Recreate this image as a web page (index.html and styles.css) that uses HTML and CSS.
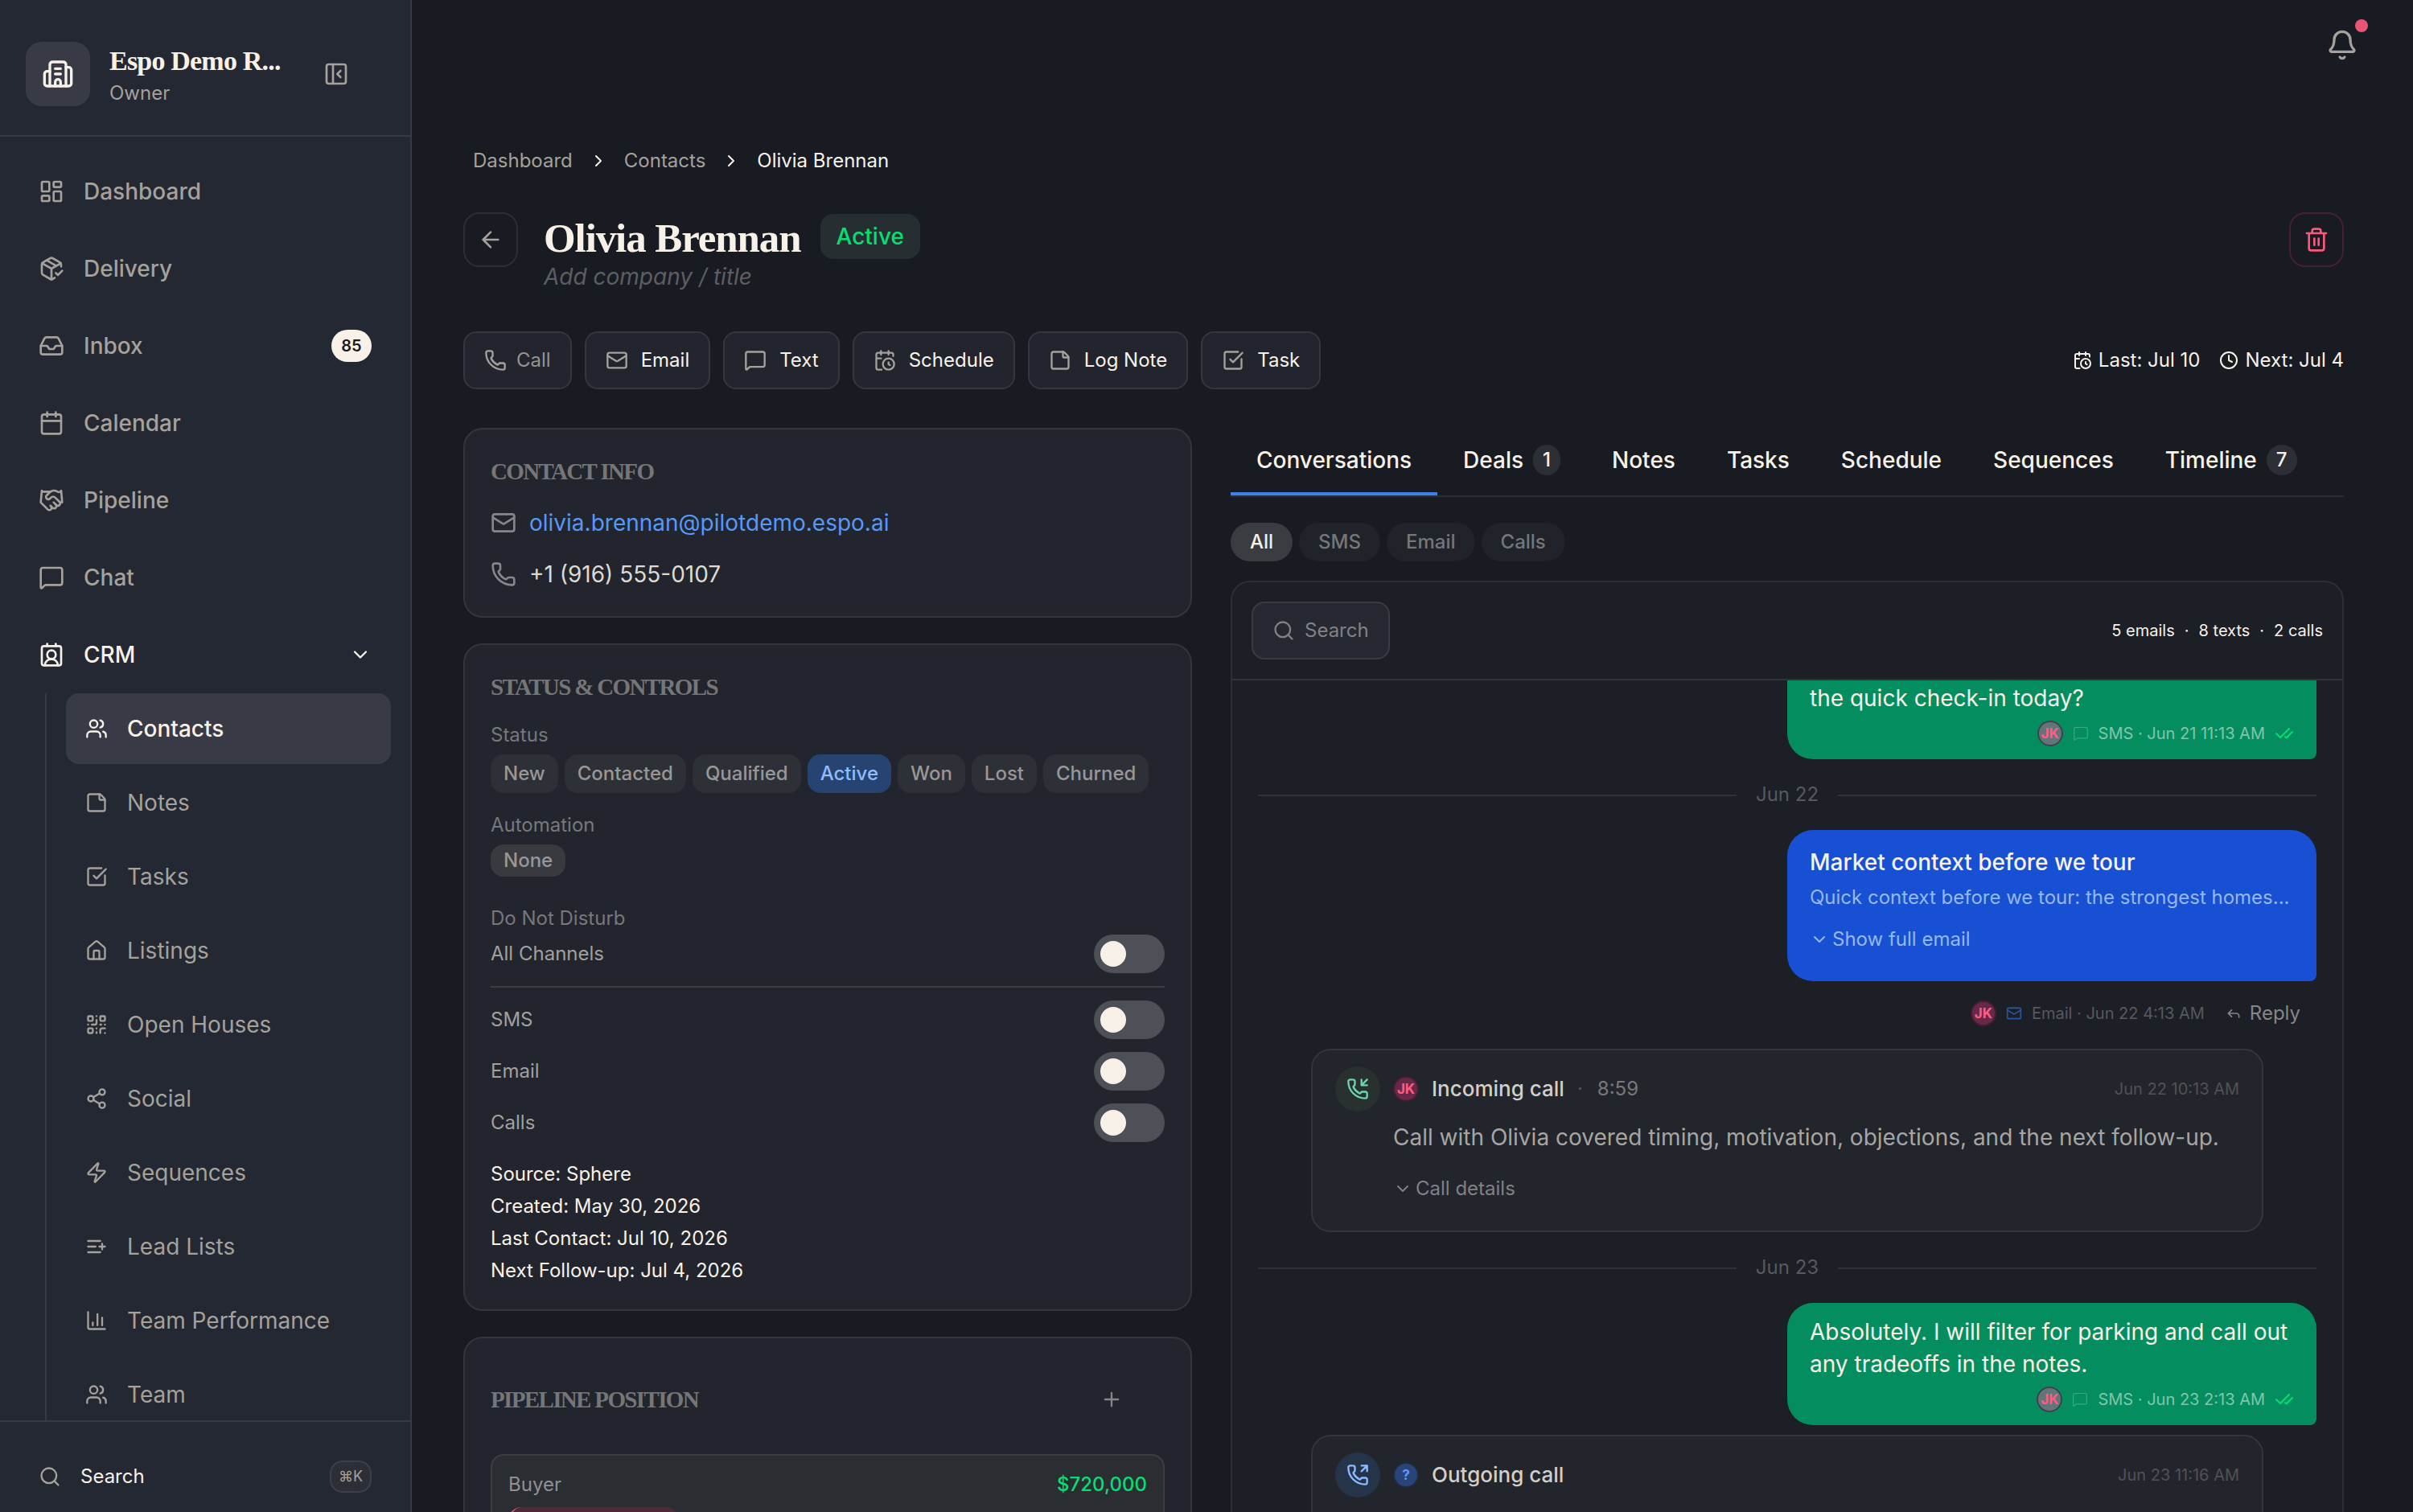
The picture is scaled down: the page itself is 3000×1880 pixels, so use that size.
FILE: index.html
```html
<!DOCTYPE html>
<html lang="en">
<head>
  <meta charset="UTF-8">
  <title>Olivia Brennan - Contacts</title>
  <meta name="viewport" content="width=device-width, initial-scale=1.0">
  <link rel="stylesheet" href="styles.css">
</head>
<body>

  <!-- icon sprite -->
  <svg class="sprite">
    <symbol id="i-building" viewBox="0 0 24 24"><path d="M10 12h4M10 8h4M14 21v-3a2 2 0 0 0-4 0v3"/><path d="M6 10H4a2 2 0 0 0-2 2v7a2 2 0 0 0 2 2h16a2 2 0 0 0 2-2V9a2 2 0 0 0-2-2h-2"/><path d="M6 21V5a2 2 0 0 1 2-2h8a2 2 0 0 1 2 2v16"/></symbol>
    <symbol id="i-panel" viewBox="0 0 24 24"><rect x="3" y="3" width="18" height="18" rx="2"/><path d="M9 3v18M16 15l-3-3 3-3"/></symbol>
    <symbol id="i-dashboard" viewBox="0 0 24 24"><rect x="3" y="3" width="7" height="9" rx="1"/><rect x="14" y="3" width="7" height="5" rx="1"/><rect x="14" y="12" width="7" height="9" rx="1"/><rect x="3" y="16" width="7" height="5" rx="1"/></symbol>
    <symbol id="i-package" viewBox="0 0 24 24"><path d="m16 16 2 2 4-4"/><path d="M21 10V8a2 2 0 0 0-1-1.73l-7-4a2 2 0 0 0-2 0l-7 4A2 2 0 0 0 3 8v8a2 2 0 0 0 1 1.73l7 4a2 2 0 0 0 2 0l2-1.14"/><path d="m7.5 4.27 9 5.15M3.29 7 12 12l8.71-5M12 22V12"/></symbol>
    <symbol id="i-inbox" viewBox="0 0 24 24"><path d="M22 12h-6l-2 3h-4l-2-3H2"/><path d="M5.45 5.11 2 12v6a2 2 0 0 0 2 2h16a2 2 0 0 0 2-2v-6l-3.45-6.89A2 2 0 0 0 16.76 4H7.24a2 2 0 0 0-1.79 1.11z"/></symbol>
    <symbol id="i-calendar" viewBox="0 0 24 24"><path d="M8 2v4M16 2v4M3 10h18"/><rect x="3" y="4" width="18" height="18" rx="2"/></symbol>
    <symbol id="i-handshake" viewBox="0 0 24 24"><path d="m11 17 2 2a1 1 0 1 0 3-3"/><path d="m14 14 2.5 2.5a1 1 0 1 0 3-3l-3.88-3.88a3 3 0 0 0-4.24 0l-.88.88a1 1 0 1 1-3-3l2.81-2.81a5.79 5.79 0 0 1 7.06-.87l.47.28a2 2 0 0 0 1.42.25L21 4"/><path d="m21 3 1 11h-2M3 3 2 14l6.5 6.5a1 1 0 1 0 3-3M3 4h8"/></symbol>
    <symbol id="i-message" viewBox="0 0 24 24"><path d="M22 17a2 2 0 0 1-2 2H6.828a2 2 0 0 0-1.414.586l-2.202 2.202A.71.71 0 0 1 2 21.286V5a2 2 0 0 1 2-2h16a2 2 0 0 1 2 2z"/></symbol>
    <symbol id="i-contact" viewBox="0 0 24 24"><path d="M16 2v2M17.915 22a6 6 0 0 0-12 0M8 2v2"/><circle cx="12" cy="12" r="4"/><rect x="3" y="4" width="18" height="18" rx="2"/></symbol>
    <symbol id="i-users" viewBox="0 0 24 24"><path d="M16 21v-2a4 4 0 0 0-4-4H6a4 4 0 0 0-4 4v2M16 3.128a4 4 0 0 1 0 7.744M22 21v-2a4 4 0 0 0-3-3.87"/><circle cx="9" cy="7" r="4"/></symbol>
    <symbol id="i-note" viewBox="0 0 24 24"><path d="M21 9a2.4 2.4 0 0 0-.706-1.706l-3.588-3.588A2.4 2.4 0 0 0 15 3H5a2 2 0 0 0-2 2v14a2 2 0 0 0 2 2h14a2 2 0 0 0 2-2z"/><path d="M15 3v5a1 1 0 0 0 1 1h5"/></symbol>
    <symbol id="i-task" viewBox="0 0 24 24"><path d="M21 10.656V19a2 2 0 0 1-2 2H5a2 2 0 0 1-2-2V5a2 2 0 0 1 2-2h12.344"/><path d="m9 11 3 3L22 4"/></symbol>
    <symbol id="i-house" viewBox="0 0 24 24"><path d="M15 21v-8a1 1 0 0 0-1-1h-4a1 1 0 0 0-1 1v8"/><path d="M3 10a2 2 0 0 1 .709-1.528l7-6a2 2 0 0 1 2.582 0l7 6A2 2 0 0 1 21 10v9a2 2 0 0 1-2 2H5a2 2 0 0 1-2-2z"/></symbol>
    <symbol id="i-qr" viewBox="0 0 24 24"><rect x="3" y="3" width="5" height="5" rx="1"/><rect x="16" y="3" width="5" height="5" rx="1"/><rect x="3" y="16" width="5" height="5" rx="1"/><path d="M21 16h-3a2 2 0 0 0-2 2v3M21 21v.01M12 7v3a2 2 0 0 1-2 2H7M3 12h.01M12 3h.01M12 16v.01M16 12h1M21 12v.01M12 21v-1"/></symbol>
    <symbol id="i-share" viewBox="0 0 24 24"><circle cx="18" cy="5" r="3"/><circle cx="6" cy="12" r="3"/><circle cx="18" cy="19" r="3"/><path d="m8.59 13.51 6.83 3.98M15.41 6.51l-6.82 3.98"/></symbol>
    <symbol id="i-zap" viewBox="0 0 24 24"><path d="M4 14a1 1 0 0 1-.78-1.63l9.9-10.2a.5.5 0 0 1 .86.46l-1.92 6.02A1 1 0 0 0 13 10h7a1 1 0 0 1 .78 1.63l-9.9 10.2a.5.5 0 0 1-.86-.46l1.92-6.02A1 1 0 0 0 11 14z"/></symbol>
    <symbol id="i-list" viewBox="0 0 24 24"><path d="M11 12H3M16 6H3M16 18H3M18 9v6M21 12h-6"/></symbol>
    <symbol id="i-chart" viewBox="0 0 24 24"><path d="M3 3v16a2 2 0 0 0 2 2h16M18 17V9M13 17V5M8 17v-3"/></symbol>
    <symbol id="i-search" viewBox="0 0 24 24"><circle cx="11" cy="11" r="8"/><path d="m21 21-4.34-4.34"/></symbol>
    <symbol id="i-down" viewBox="0 0 24 24"><path d="m6 9 6 6 6-6"/></symbol>
    <symbol id="i-right" viewBox="0 0 24 24"><path d="m9 18 6-6-6-6"/></symbol>
    <symbol id="i-left" viewBox="0 0 24 24"><path d="m12 19-7-7 7-7M19 12H5"/></symbol>
    <symbol id="i-bell" viewBox="0 0 24 24"><path d="M10.268 21a2 2 0 0 0 3.464 0"/><path d="M3.262 15.326A1 1 0 0 0 4 17h16a1 1 0 0 0 .74-1.673C19.41 13.956 18 12.499 18 8A6 6 0 0 0 6 8c0 4.499-1.411 5.956-2.738 7.326"/></symbol>
    <symbol id="i-trash" viewBox="0 0 24 24"><path d="M10 11v6M14 11v6M19 6v14a2 2 0 0 1-2 2H7a2 2 0 0 1-2-2V6M3 6h18M8 6V4a2 2 0 0 1 2-2h4a2 2 0 0 1 2 2v2"/></symbol>
    <symbol id="i-phone" viewBox="0 0 24 24"><path d="M13.832 16.568a1 1 0 0 0 1.213-.303l.355-.465A2 2 0 0 1 17 15h3a2 2 0 0 1 2 2v3a2 2 0 0 1-2 2A18 18 0 0 1 2 4a2 2 0 0 1 2-2h3a2 2 0 0 1 2 2v3a2 2 0 0 1-.8 1.6l-.468.351a1 1 0 0 0-.292 1.233 14 14 0 0 0 6.392 6.384"/></symbol>
    <symbol id="i-phone-in" viewBox="0 0 24 24"><path d="M16 2v6h6M22 2l-6 6"/><path d="M13.832 16.568a1 1 0 0 0 1.213-.303l.355-.465A2 2 0 0 1 17 15h3a2 2 0 0 1 2 2v3a2 2 0 0 1-2 2A18 18 0 0 1 2 4a2 2 0 0 1 2-2h3a2 2 0 0 1 2 2v3a2 2 0 0 1-.8 1.6l-.468.351a1 1 0 0 0-.292 1.233 14 14 0 0 0 6.392 6.384"/></symbol>
    <symbol id="i-phone-out" viewBox="0 0 24 24"><path d="m16 8 6-6M22 8V2h-6"/><path d="M13.832 16.568a1 1 0 0 0 1.213-.303l.355-.465A2 2 0 0 1 17 15h3a2 2 0 0 1 2 2v3a2 2 0 0 1-2 2A18 18 0 0 1 2 4a2 2 0 0 1 2-2h3a2 2 0 0 1 2 2v3a2 2 0 0 1-.8 1.6l-.468.351a1 1 0 0 0-.292 1.233 14 14 0 0 0 6.392 6.384"/></symbol>
    <symbol id="i-mail" viewBox="0 0 24 24"><path d="m22 7-8.991 5.727a2 2 0 0 1-2.009 0L2 7"/><rect x="2" y="4" width="20" height="16" rx="2"/></symbol>
    <symbol id="i-cal-clock" viewBox="0 0 24 24"><path d="M16 14v2.2l1.6 1M16 2v4M21 7.5V6a2 2 0 0 0-2-2H5a2 2 0 0 0-2 2v14a2 2 0 0 0 2 2h3.5M3 10h5M8 2v4"/><circle cx="16" cy="16" r="6"/></symbol>
    <symbol id="i-clock" viewBox="0 0 24 24"><circle cx="12" cy="12" r="10"/><path d="M12 6v6l4 2"/></symbol>
    <symbol id="i-plus" viewBox="0 0 24 24"><path d="M5 12h14M12 5v14"/></symbol>
    <symbol id="i-checks" viewBox="0 0 24 24"><path d="M18 6 7 17l-5-5M22 10l-7.5 7.5L13 16"/></symbol>
    <symbol id="i-reply" viewBox="0 0 24 24"><path d="M20 18v-2a4 4 0 0 0-4-4H4M9 17l-5-5 5-5"/></symbol>
  </svg>

  <div class="app">
    <aside class="sidebar">
      <div class="workspace">
        <div class="logo"><svg class="icon icon-40"><use href="#i-building"/></svg></div>
        <div class="workspace-text">
          <div class="workspace-name">Espo Demo R...</div>
          <div class="workspace-role">Owner</div>
        </div>
        <svg class="icon icon-32"><use href="#i-panel"/></svg>
      </div>

      <nav class="nav">
        <a class="nav-item"><svg class="icon icon-32"><use href="#i-dashboard"/></svg>Dashboard</a>
        <a class="nav-item"><svg class="icon icon-32"><use href="#i-package"/></svg>Delivery</a>
        <a class="nav-item"><svg class="icon icon-32"><use href="#i-inbox"/></svg>Inbox<span class="count">85</span></a>
        <a class="nav-item"><svg class="icon icon-32"><use href="#i-calendar"/></svg>Calendar</a>
        <a class="nav-item"><svg class="icon icon-32"><use href="#i-handshake"/></svg>Pipeline</a>
        <a class="nav-item"><svg class="icon icon-32"><use href="#i-message"/></svg>Chat</a>
        <a class="nav-item open"><svg class="icon icon-32"><use href="#i-contact"/></svg>CRM<svg class="icon icon-28 push"><use href="#i-down"/></svg></a>
        <div class="subnav">
          <a class="subnav-item current"><svg class="icon icon-28"><use href="#i-users"/></svg>Contacts</a>
          <a class="subnav-item"><svg class="icon icon-28"><use href="#i-note"/></svg>Notes</a>
          <a class="subnav-item"><svg class="icon icon-28"><use href="#i-task"/></svg>Tasks</a>
          <a class="subnav-item"><svg class="icon icon-28"><use href="#i-house"/></svg>Listings</a>
          <a class="subnav-item"><svg class="icon icon-28"><use href="#i-qr"/></svg>Open Houses</a>
          <a class="subnav-item"><svg class="icon icon-28"><use href="#i-share"/></svg>Social</a>
          <a class="subnav-item"><svg class="icon icon-28"><use href="#i-zap"/></svg>Sequences</a>
          <a class="subnav-item"><svg class="icon icon-28"><use href="#i-list"/></svg>Lead Lists</a>
          <a class="subnav-item"><svg class="icon icon-28"><use href="#i-chart"/></svg>Team Performance</a>
          <a class="subnav-item"><svg class="icon icon-28"><use href="#i-users"/></svg>Team</a>
        </div>
      </nav>

      <div class="sidebar-search">
        <svg class="icon icon-28"><use href="#i-search"/></svg>
        <span>Search</span>
        <kbd>⌘K</kbd>
      </div>
    </aside>

    <main class="main">
      <div class="topbar">
        <div class="bell"><svg class="icon icon-40"><use href="#i-bell"/></svg><span class="bell-dot"></span></div>
      </div>

      <div class="breadcrumb">
        <a>Dashboard</a>
        <svg class="icon icon-24"><use href="#i-right"/></svg>
        <a>Contacts</a>
        <svg class="icon icon-24"><use href="#i-right"/></svg>
        <span>Olivia Brennan</span>
      </div>

      <header class="head">
        <button class="square-btn"><svg class="icon icon-32"><use href="#i-left"/></svg></button>
        <div class="head-text">
          <div class="name-row">
            <h1>Olivia Brennan</h1>
            <span class="status-badge">Active</span>
          </div>
          <div class="subtitle">Add company / title</div>
        </div>
        <button class="square-btn danger"><svg class="icon icon-32"><use href="#i-trash"/></svg></button>
      </header>

      <div class="actions">
        <button class="action disabled"><svg class="icon icon-28"><use href="#i-phone"/></svg>Call</button>
        <button class="action"><svg class="icon icon-28"><use href="#i-mail"/></svg>Email</button>
        <button class="action"><svg class="icon icon-28"><use href="#i-message"/></svg>Text</button>
        <button class="action"><svg class="icon icon-28"><use href="#i-cal-clock"/></svg>Schedule</button>
        <button class="action"><svg class="icon icon-28"><use href="#i-note"/></svg>Log Note</button>
        <button class="action"><svg class="icon icon-28"><use href="#i-task"/></svg>Task</button>
        <div class="touches">
          <span><svg class="icon icon-24"><use href="#i-cal-clock"/></svg>Last: Jul 10</span>
          <span><svg class="icon icon-24"><use href="#i-clock"/></svg>Next: Jul 4</span>
        </div>
      </div>

      <div class="columns">
        <div class="left">
          <section class="card">
            <h2>CONTACT INFO</h2>
            <div class="info-row"><svg class="icon icon-32"><use href="#i-mail"/></svg><a class="email">olivia.brennan@pilotdemo.espo.ai</a></div>
            <div class="info-row"><svg class="icon icon-32"><use href="#i-phone"/></svg><span>+1 (916) 555-0107</span></div>
          </section>

          <section class="card">
            <h2>STATUS &amp; CONTROLS</h2>
            <div class="label">Status</div>
            <div class="chips">
              <span class="chip">New</span>
              <span class="chip">Contacted</span>
              <span class="chip">Qualified</span>
              <span class="chip selected">Active</span>
              <span class="chip">Won</span>
              <span class="chip">Lost</span>
              <span class="chip">Churned</span>
            </div>
            <div class="label">Automation</div>
            <div class="chips"><span class="chip none">None</span></div>
            <div class="label dnd">Do Not Disturb</div>
            <div class="toggle-row all"><span>All Channels</span><i class="toggle"></i></div>
            <div class="toggle-row"><span>SMS</span><i class="toggle"></i></div>
            <div class="toggle-row"><span>Email</span><i class="toggle"></i></div>
            <div class="toggle-row"><span>Calls</span><i class="toggle"></i></div>
            <ul class="facts">
              <li>Source: Sphere</li>
              <li>Created: May 30, 2026</li>
              <li>Last Contact: Jul 10, 2026</li>
              <li>Next Follow-up: Jul 4, 2026</li>
            </ul>
          </section>

          <section class="card">
            <div class="card-head">
              <h2>PIPELINE POSITION</h2>
              <svg class="icon icon-28"><use href="#i-plus"/></svg>
            </div>
            <div class="deal">
              <div class="deal-row"><span>Buyer</span><strong>$720,000</strong></div>
              <div class="deal-stage"></div>
            </div>
          </section>
        </div>

        <div class="right">
          <div class="tabs">
            <a class="tab active">Conversations</a>
            <a class="tab">Deals<span>1</span></a>
            <a class="tab">Notes</a>
            <a class="tab">Tasks</a>
            <a class="tab">Schedule</a>
            <a class="tab">Sequences</a>
            <a class="tab">Timeline<span>7</span></a>
          </div>

          <div class="filters">
            <span class="filter on">All</span>
            <span class="filter">SMS</span>
            <span class="filter">Email</span>
            <span class="filter">Calls</span>
          </div>

          <section class="panel">
            <div class="panel-head">
              <button class="search-btn"><svg class="icon icon-28"><use href="#i-search"/></svg>Search</button>
              <div class="totals"><span>5 emails</span><span>·</span><span>8 texts</span><span>·</span><span>2 calls</span></div>
            </div>

            <div class="thread">
              <div class="bubble sms cut">
                <p>the quick check-in today?</p>
                <div class="meta">
                  <span class="avatar on-sms">JK</span>
                  <svg class="icon icon-20 kind"><use href="#i-message"/></svg>
                  <span>SMS · Jun 21 11:13 AM</span>
                  <svg class="icon icon-24 read"><use href="#i-checks"/></svg>
                </div>
              </div>

              <div class="day"><span>Jun 22</span></div>

              <div class="bubble mail">
                <h3>Market context before we tour</h3>
                <p class="preview">Quick context before we tour: the strongest homes...</p>
                <a class="more"><svg class="icon icon-24"><use href="#i-down"/></svg>Show full email</a>
              </div>
              <div class="meta below">
                <span class="avatar">JK</span>
                <svg class="icon icon-20 kind-mail"><use href="#i-mail"/></svg>
                <span>Email · Jun 22 4:13 AM</span>
                <a class="reply"><svg class="icon icon-20"><use href="#i-reply"/></svg>Reply</a>
              </div>

              <article class="call">
                <div class="call-icon in"><svg class="icon icon-28"><use href="#i-phone-in"/></svg></div>
                <div class="call-body">
                  <div class="call-head">
                    <span class="avatar">JK</span>
                    <b>Incoming call</b>
                    <span class="dot">·</span>
                    <span class="length">8:59</span>
                    <time>Jun 22 10:13 AM</time>
                  </div>
                  <p>Call with Olivia covered timing, motivation, objections, and the next follow-up.</p>
                  <a class="more"><svg class="icon icon-24"><use href="#i-down"/></svg>Call details</a>
                </div>
              </article>

              <div class="day"><span>Jun 23</span></div>

              <div class="bubble sms">
                <p>Absolutely. I will filter for parking and call out any tradeoffs in the notes.</p>
                <div class="meta">
                  <span class="avatar on-sms">JK</span>
                  <svg class="icon icon-20 kind"><use href="#i-message"/></svg>
                  <span>SMS · Jun 23 2:13 AM</span>
                  <svg class="icon icon-24 read"><use href="#i-checks"/></svg>
                </div>
              </div>

              <article class="call outgoing">
                <div class="call-icon out"><svg class="icon icon-28"><use href="#i-phone-out"/></svg></div>
                <div class="call-body">
                  <div class="call-head">
                    <span class="avatar unknown">?</span>
                    <b>Outgoing call</b>
                    <time>Jun 23 11:16 AM</time>
                  </div>
                </div>
              </article>
            </div>
          </section>
        </div>
      </div>
    </main>
  </div>

</body>
</html>
```

FILE: styles.css
```css
* { box-sizing: border-box; }

body {
  margin: 0;
  background: #181b22;
  color: #f7f1e8;
  font-family: Inter, "Liberation Sans", sans-serif;
  font-size: 24px;
  line-height: 32px;
}
h1, h2, h3, p, ul { margin: 0; padding: 0; }
button { font: inherit; color: inherit; padding: 0; }

.sprite { display: none; }
.icon { fill: none; stroke: currentColor; stroke-width: 2; stroke-linecap: round; stroke-linejoin: round; flex: none; }
.icon-20 { width: 20px; height: 20px; }
.icon-24 { width: 24px; height: 24px; }
.icon-28 { width: 28px; height: 28px; }
.icon-32 { width: 32px; height: 32px; }
.icon-40 { width: 40px; height: 40px; }
.push { margin-left: auto; }

.app { display: flex; width: 3000px; height: 1880px; overflow: hidden; }

/* sidebar */
.sidebar { width: 512px; flex: none; display: flex; flex-direction: column; background: #242833; border-right: 2px solid #373a45; color: #a5a19b; }
.workspace { height: 170px; flex: none; display: flex; align-items: flex-start; padding: 52px 32px 0; border-bottom: 2px solid #373a45; }
.logo { width: 80px; height: 80px; border-radius: 20px; background: #383b46; color: #f7f1e8; display: flex; align-items: center; justify-content: center; margin-right: 24px; }
.workspace-text { width: 252px; }
.workspace-name { font-family: "Liberation Serif", serif; font-weight: bold; font-size: 34px; line-height: 48px; letter-spacing: -0.8px; color: #f7f1e8; white-space: nowrap; }
.workspace-role { line-height: 32px; }
.workspace > .icon { margin: 24px 0 0 14px; }

.nav { flex: 1; min-height: 0; overflow: hidden; padding: 24px 24px 0; display: flex; flex-direction: column; gap: 8px; }
.nav-item { height: 88px; flex: none; display: flex; align-items: center; gap: 24px; padding: 0 24px; font-size: 28px; font-weight: 500; }
.nav-item.open { color: #f7f1e8; }
.count { margin-left: auto; width: 50px; height: 40px; border-radius: 20px; background: #f7f1e8; color: #181b22; font-size: 20px; font-weight: 600; line-height: 40px; text-align: center; }
.subnav { margin: -4px 0 0 32px; padding-left: 24px; border-left: 2px solid #373a45; display: flex; flex-direction: column; gap: 4px; }
.subnav-item { height: 88px; flex: none; display: flex; align-items: center; gap: 24px; padding: 0 24px; border-radius: 16px; font-size: 28px; }
.subnav-item.current { background: #383b46; color: #f7f1e8; font-weight: 500; }

.sidebar-search { height: 114px; flex: none; display: flex; align-items: center; padding: 24px 48px 0; gap: 24px; border-top: 2px solid #373a45; }
.sidebar-search span { color: #f7f1e8; }
.sidebar-search kbd { margin-left: auto; width: 52px; height: 40px; border: 2px solid #3d4049; border-radius: 16px; background: #2c2f37; font: 18px/36px Inter, "DejaVu Sans", sans-serif; text-align: center; }

/* main */
.main { flex: 1; padding: 0 86px 0 64px; }
.topbar { height: 112px; display: flex; align-items: center; justify-content: flex-end; }
.bell { position: relative; width: 40px; height: 40px; margin-right: -18px; color: #a5a19b; }
.bell-dot { position: absolute; top: -12px; right: -12px; width: 16px; height: 16px; border-radius: 50%; background: #e95577; }

.breadcrumb { display: flex; align-items: center; gap: 20px; margin-top: 72px; padding-left: 12px; height: 32px; }
.breadcrumb a { color: #a5a19b; }

.head { display: flex; align-items: flex-start; margin-top: 48px; height: 100px; }
.square-btn { width: 68px; height: 68px; border: 2px solid #2b2e36; border-radius: 20px; background: none; color: #a5a19b; display: flex; align-items: center; justify-content: center; }
.square-btn.danger { margin-left: auto; border-color: #46202f; color: #fb587b; }
.head-text { margin-left: 32px; }
.name-row { display: flex; align-items: center; gap: 24px; height: 60px; }
h1 { font: bold 51px/56px "Liberation Serif", serif; letter-spacing: -1.1px; padding-top: 3px; }
.status-badge { height: 56px; padding: 0 20px; border-radius: 16px; background: #272e31; color: #05df72; font-size: 28px; font-weight: 500; line-height: 56px; }
.subtitle { font-size: 28px; line-height: 40px; font-style: italic; color: #5c5e62; }

.actions { display: flex; align-items: center; gap: 16px; margin-top: 48px; }
.action { height: 72px; display: flex; align-items: center; gap: 16px; padding: 0 24px; border: 2px solid #34373d; border-radius: 16px; background: #22252d; }
.action .icon { color: #a5a19b; }
.action.disabled { gap: 12px; color: #96938f; }
.touches { margin-left: auto; display: flex; gap: 24px; }
.touches span { display: flex; align-items: center; gap: 8px; }

.columns { display: flex; gap: 48px; margin-top: 48px; align-items: flex-start; }
.left { width: 906px; display: flex; flex-direction: column; gap: 32px; }

/* cards */
.card { padding: 32px 32px 28px; border: 2px solid #33363b; border-radius: 24px; background: #22252d; }
h2 { font: bold 29px/40px "Liberation Serif", serif; letter-spacing: -1.65px; color: #757678; }
.info-row { display: flex; align-items: center; gap: 16px; height: 48px; margin-top: 16px; font-size: 28px; color: #dcdad3; }
h2 + .info-row { margin-top: 20px; }
.info-row .icon { color: #85868a; }
.email { color: #5898f8; }

.label { margin-top: 24px; color: #77787b; }
.label.dnd { margin-top: 36px; }
.chips { display: flex; gap: 8px; margin-top: 8px; }
.chip { height: 48px; padding: 0 16px; border-radius: 16px; background: #2d3036; color: #989796; font-weight: 500; line-height: 48px; }
.chip.selected { background: #264371; color: #8ebcff; }
.chip.none { height: 40px; line-height: 40px; background: #383a40; }

.toggle-row { display: flex; align-items: center; justify-content: space-between; height: 48px; margin-top: 16px; color: #a1a09e; }
.toggle-row.all { margin-top: 4px; height: 66px; padding-bottom: 16px; border-bottom: 2px solid #3a3c42; }
.toggle { width: 88px; height: 48px; padding: 8px; border-radius: 24px; background: #4d5056; }
.toggle::before { content: ""; display: block; width: 32px; height: 32px; border-radius: 50%; background: #f7f1e8; }
.facts { list-style: none; margin-top: 20px; line-height: 40px; }

.card-head { display: flex; align-items: center; justify-content: space-between; height: 88px; padding-right: 52px; margin-bottom: 24px; color: #85868a; }
.deal { height: 160px; padding: 20px; border: 2px solid #3c3e43; border-radius: 16px; background: #2a2d32; }
.deal-row { display: flex; justify-content: space-between; color: #8f9193; }
.deal-row strong { color: #05df72; font-weight: 500; }
.deal-stage { width: 212px; height: 44px; margin-top: 12px; border-radius: 16px; border-left: 3px solid #fb587b; background: #4a2c38; }

/* tabs and filters */
.right { width: 1384px; }
.tabs { display: flex; height: 86px; border-bottom: 2px solid #2b2e35; }
.tab { display: flex; align-items: center; padding: 0 32px; border-bottom: 4px solid transparent; font-size: 28px; font-weight: 500; }
.tab.active { border-color: #4080ea; }
.tab span { margin-left: 12px; height: 38px; padding: 0 12px; border-radius: 19px; background: #2c2f36; font-size: 24px; line-height: 38px; }
.filters { display: flex; gap: 8px; margin-top: 32px; }
.filter { height: 48px; padding: 0 24px; border-radius: 24px; background: #20232a; color: #75767a; font-weight: 500; line-height: 48px; }
.filter.on { background: #3a3c42; color: #f7f1e8; }

/* conversation */
.panel { height: 1300px; margin-top: 24px; border: 2px solid #2c2f35; border-radius: 24px; background: #1c1f26; overflow: hidden; }
.panel-head { display: flex; align-items: center; justify-content: space-between; height: 122px; padding: 0 24px; border-bottom: 2px solid #303338; }
.search-btn { height: 72px; display: flex; align-items: center; gap: 12px; padding: 0 24px; border: 2px solid #3a3c44; border-radius: 16px; background: #262932; color: #818284; }
.totals { display: flex; gap: 12px; font-size: 20px; }

.thread { display: flex; flex-direction: column; padding: 0 32px; }
.bubble { align-self: flex-end; width: 658px; padding: 16px 28px; border-radius: 32px 32px 8px 32px; font-size: 28px; line-height: 40px; }
.bubble.sms { background: #048e60; }
.bubble.cut { padding-top: 2px; border-top-left-radius: 0; border-top-right-radius: 0; }
.bubble.mail { height: 188px; padding-top: 20px; background: #1850d3; }
.bubble h3 { font-size: 28px; font-weight: 500; line-height: 40px; }
.preview { font-size: 24px; line-height: 32px; margin-top: 8px; color: #94b9f1; white-space: nowrap; }
.more { display: flex; align-items: center; gap: 4px; font-size: 24px; line-height: 32px; }
.mail .more { margin-top: 20px; color: #94b9f1; }

.meta { display: flex; align-items: center; justify-content: flex-end; gap: 12px; height: 32px; margin-top: 8px; font-size: 20px; line-height: 32px; color: #80c5ae; }
.meta .kind { color: #3aaa82; stroke-width: 1.4; }
.meta .read { color: #05df72; }
.meta.below { height: 84px; margin: 0; padding: 0 20px 4px 0; color: #57595e; }
.meta .kind-mail { color: #2a55a0; }
.reply { display: flex; align-items: center; gap: 10px; margin-left: 14px; font-size: 24px; color: #85868a; }

.avatar { width: 32px; height: 32px; flex: none; border: 2px solid #451f2e; border-radius: 50%; background: #672849; color: #ff5c82; font-size: 17px; font-weight: 700; line-height: 28px; text-align: center; }
.avatar.on-sms { border-color: #40424c; background: #63757b; }
.avatar.unknown { border-color: #232b3b; background: #28457a; color: #5b9bf8; }

.day { display: flex; align-items: center; gap: 24px; height: 88px; padding-top: 2px; color: #57595e; }
.day span { margin-top: -2px; }
.day::before, .day::after { content: ""; flex: 1; height: 2px; background: #2f3237; }

.call { display: flex; gap: 16px; width: 1184px; height: 228px; margin-left: 66px; padding: 20px 28px; border: 2px solid #33363b; border-radius: 24px; background: #22252c; }
.call.outgoing { margin-top: 12px; }
.call-icon { width: 56px; height: 56px; flex: none; border-radius: 50%; display: flex; align-items: center; justify-content: center; }
.call-icon.in { background: #28312f; color: #6fd3ae; }
.call-icon.out { background: #26344a; color: #8bbcff; }
.call-body { flex: 1; }
.call-head { display: flex; align-items: center; gap: 16px; height: 56px; }
.call-head b { font-size: 26px; font-weight: 500; color: #cfcfcb; }
.call-head .dot { color: #55575c; }
.call-head .length { margin-left: 2px; color: #77787b; }
.call-head time { margin-left: auto; font-size: 20px; color: #505257; }
.call p { margin-top: 12px; font-size: 28px; line-height: 40px; color: #a6a5a3; white-space: nowrap; }
.call .more { margin-top: 28px; color: #808185; }
```
